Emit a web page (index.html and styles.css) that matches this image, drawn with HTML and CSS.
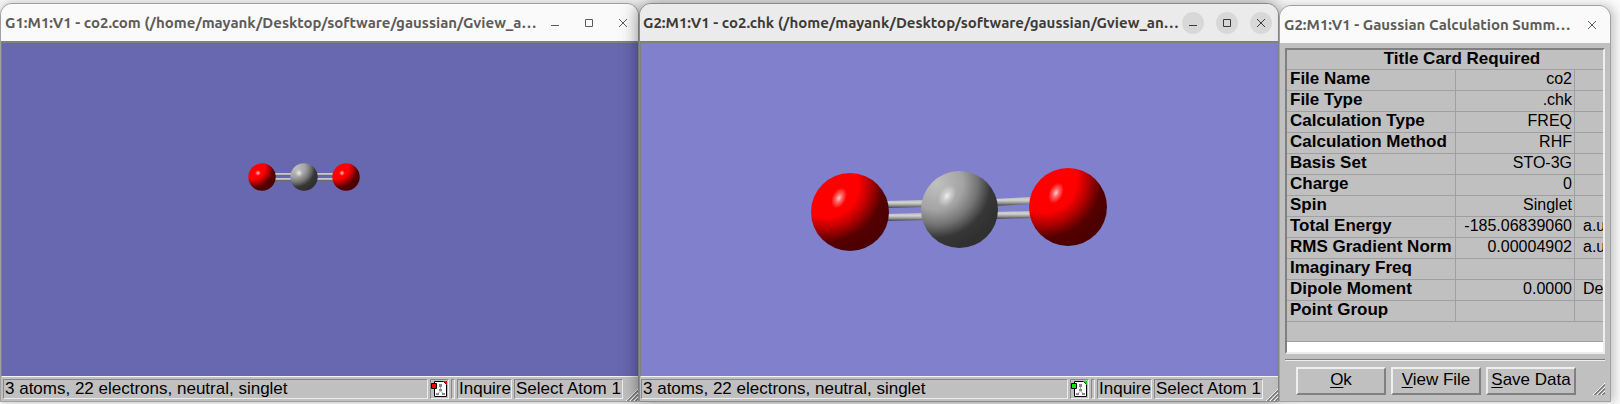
FILE: index.html
```
<!DOCTYPE html>
<html lang="en">
<head>
<meta charset="utf-8">
<title>GaussView</title>
<link rel="stylesheet" href="styles.css">
</head>
<body>
<svg class="defs" width="0" height="0" aria-hidden="true">
  <defs>
    <radialGradient id="red" cx=".2" cy=".16" r=".86">
      <stop offset="0" stop-color="#ff0000"/><stop offset=".48" stop-color="#fd0000"/><stop offset=".64" stop-color="#b80000"/><stop offset=".84" stop-color="#550000"/><stop offset="1" stop-color="#4d0000"/>
    </radialGradient>
    <radialGradient id="gray" cx=".2" cy=".16" r=".86">
      <stop offset="0" stop-color="#c0c0c0"/><stop offset=".4" stop-color="#a4a4a4"/><stop offset=".62" stop-color="#747474"/><stop offset=".82" stop-color="#373737"/><stop offset="1" stop-color="#303030"/>
    </radialGradient>
    <radialGradient id="shine">
      <stop offset="0" stop-color="#fff" stop-opacity=".8"/><stop offset=".4" stop-color="#fff" stop-opacity=".4"/><stop offset="1" stop-color="#fff" stop-opacity="0"/>
    </radialGradient>
    <linearGradient id="rod" x2="0" y2="1">
      <stop offset="0" stop-color="#bdbdbd"/><stop offset=".35" stop-color="#d2d2d2"/><stop offset=".65" stop-color="#9a9a9a"/><stop offset="1" stop-color="#404040"/>
    </linearGradient>
  </defs>
</svg>
<main class="desktop">
  <section class="window">
    <header class="titlebar">
      <h1 class="title">G1:M1:V1 - co2.com (/home/mayank/Desktop/software/gaussian/Gview_a…</h1>
      <div class="controls">
        <button class="control" aria-label="Minimize"><svg viewBox="0 0 22 22"><path d="M7 13.500h8"/></svg></button>
        <button class="control" aria-label="Maximize"><svg viewBox="0 0 22 22"><path d="M7.500 7.500h7v7h-7z"/></svg></button>
        <button class="control" aria-label="Close"><svg viewBox="0 0 22 22"><path d="M7 7l8 8M15 7l-8 8"/></svg></button>
      </div>
    </header>
    <div class="view">
      <svg class="molecule" viewBox="2 43 636 333" role="img" aria-label="Carbon dioxide molecule">
        <rect x="274" y="173" width="60" height="3" fill="url(#rod)"/>
        <rect x="274" y="178" width="60" height="3" fill="url(#rod)"/>
        <circle cx="262" cy="177" r="13.700" fill="url(#red)"/><circle cx="258" cy="173" r="3" fill="url(#shine)"/>
        <circle cx="304" cy="177" r="13.700" fill="url(#gray)"/><circle cx="299" cy="173" r="4" fill="url(#shine)"/>
        <circle cx="346" cy="177" r="13.700" fill="url(#red)"/><circle cx="342" cy="173" r="3" fill="url(#shine)"/>
      </svg>
    </div>
    <footer class="status">
      <span class="cell wide">3 atoms, 22 electrons, neutral, singlet</span>
      <span class="cell icon"><svg viewBox="0 0 17 18"><path d="M3.500 1.500h9l3 3v12h-12z" fill="#fff" stroke="#000"/><path d="M12 1h4v4z" fill="#f00"/><path d="M9.500 6v5L6 14.500M9.500 11l4 3.500" stroke="#aaa" fill="none"/><path d="M8 4h3v3H8zM8 9h3v2H8zM5 13h3v2H5zM11 13h3v2h-3z" fill="#888"/><path d="M.500 3.500h5v5h-5z" fill="#f00" stroke="#000"/></svg></span>
      <span class="cell slim"></span>
      <span class="cell mode">Inquire</span>
      <span class="cell pick">Select Atom 1</span>
      <svg class="grip" viewBox="0 0 12 12"><path d="M0 12L12 0M4 12l8-8M8 12l4-4" stroke="#fff"/><path d="M1.500 12L12 1.500M5.500 12L12 5.500M9.500 12L12 9.500" stroke="#777" stroke-width="1.500"/></svg>
    </footer>
  </section>

  <section class="window active">
    <header class="titlebar">
      <h1 class="title">G2:M1:V1 - co2.chk (/home/mayank/Desktop/software/gaussian/Gview_an…</h1>
      <div class="controls">
        <button class="control" aria-label="Minimize"><svg viewBox="0 0 22 22"><path d="M7 13.500h8"/></svg></button>
        <button class="control" aria-label="Maximize"><svg viewBox="0 0 22 22"><path d="M7.500 7.500h7v7h-7z"/></svg></button>
        <button class="control" aria-label="Close"><svg viewBox="0 0 22 22"><path d="M7 7l8 8M15 7l-8 8"/></svg></button>
      </div>
    </header>
    <div class="view">
      <svg class="molecule" viewBox="641 43 637 333" role="img" aria-label="Carbon dioxide molecule, enlarged">
        <path d="M886 201l38-1v7l-38 1z" fill="url(#rod)"/>
        <path d="M886 214l38-1v7l-38 1z" fill="url(#rod)"/>
        <path d="M994 199l38-2v7l-38 2z" fill="url(#rod)"/>
        <path d="M994 212l38-1v7l-38 1z" fill="url(#rod)"/>
        <circle cx="850" cy="212" r="39" fill="url(#red)"/><ellipse cx="839" cy="198" rx="7" ry="11" transform="rotate(25 839 198)" fill="url(#shine)"/>
        <circle cx="959.500" cy="209.500" r="38.500" fill="url(#gray)"/><ellipse cx="947" cy="196" rx="8" ry="12" transform="rotate(30 947 196)" fill="url(#shine)"/>
        <circle cx="1068" cy="207" r="39" fill="url(#red)"/><ellipse cx="1056" cy="193" rx="7" ry="11" transform="rotate(25 1056 193)" fill="url(#shine)"/>
      </svg>
    </div>
    <footer class="status">
      <span class="cell wide">3 atoms, 22 electrons, neutral, singlet</span>
      <span class="cell icon"><svg viewBox="0 0 17 18"><path d="M3.500 1.500h9l3 3v12h-12z" fill="#fff" stroke="#000"/><path d="M12 1h4v4z" fill="#0d0"/><path d="M9.500 6v5L6 14.500M9.500 11l4 3.500" stroke="#aaa" fill="none"/><path d="M8 4h3v3H8zM8 9h3v2H8zM5 13h3v2H5zM11 13h3v2h-3z" fill="#888"/><path d="M.500 3.500h5v5h-5z" fill="#0e0" stroke="#000"/></svg></span>
      <span class="cell slim"></span>
      <span class="cell mode">Inquire</span>
      <span class="cell pick">Select Atom 1</span>
      <svg class="grip" viewBox="0 0 12 12"><path d="M0 12L12 0M4 12l8-8M8 12l4-4" stroke="#fff"/><path d="M1.500 12L12 1.500M5.500 12L12 5.500M9.500 12L12 9.500" stroke="#777" stroke-width="1.500"/></svg>
    </footer>
  </section>

  <section class="window dialog">
    <header class="titlebar">
      <h1 class="title">G2:M1:V1 - Gaussian Calculation Summ…</h1>
      <div class="controls">
        <button class="control" aria-label="Close"><svg viewBox="0 0 22 22"><path d="M7 7l8 8M15 7l-8 8"/></svg></button>
      </div>
    </header>
    <div class="summary">
      <div class="frame">
        <table class="table">
          <colgroup><col class="name"><col class="value"><col class="unit"></colgroup>
          <thead><tr><th colspan="3" class="caption">Title Card Required</th></tr></thead>
          <tbody>
            <tr><th scope="row">File Name</th><td>co2</td><td></td></tr>
            <tr><th scope="row">File Type</th><td>.chk</td><td></td></tr>
            <tr><th scope="row">Calculation Type</th><td>FREQ</td><td></td></tr>
            <tr><th scope="row">Calculation Method</th><td>RHF</td><td></td></tr>
            <tr><th scope="row">Basis Set</th><td>STO-3G</td><td></td></tr>
            <tr><th scope="row">Charge</th><td>0</td><td></td></tr>
            <tr><th scope="row">Spin</th><td>Singlet</td><td></td></tr>
            <tr><th scope="row">Total Energy</th><td>-185.06839060</td><td class="measure">a.u.</td></tr>
            <tr><th scope="row">RMS Gradient Norm</th><td>0.00004902</td><td class="measure">a.u.</td></tr>
            <tr><th scope="row">Imaginary Freq</th><td></td><td></td></tr>
            <tr><th scope="row">Dipole Moment</th><td>0.0000</td><td class="measure">Debye</td></tr>
            <tr><th scope="row">Point Group</th><td></td><td></td></tr>
            <tr><td colspan="3" class="filler"></td></tr>
          </tbody>
        </table>
      </div>
      <div class="actions">
        <button class="button"><u>O</u>k</button>
        <button class="button"><u>V</u>iew File</button>
        <button class="button"><u>S</u>ave Data</button>
        <svg class="grip" viewBox="0 0 12 12"><path d="M0 12L12 0M4 12l8-8M8 12l4-4" stroke="#fff"/><path d="M1.500 12L12 1.500M5.500 12L12 5.500M9.500 12L12 9.500" stroke="#777" stroke-width="1.500"/></svg>
      </div>
    </div>
  </section>
</main>
</body>
</html>
```
FILE: styles.css
```
* { box-sizing: border-box; }
body {
  margin: 0;
  background: #fafafa;
  font-family: "Liberation Sans", Arial, sans-serif;
  font-size: 17px;
  color: #000;
}
.defs { position: absolute; }
.desktop {
  display: grid;
  grid-template-columns: 639fr 640fr 332fr;
  min-height: 100vh;
  padding: 3px 9px 2px 0;
  overflow: hidden;
}
.window {
  display: flex;
  flex-direction: column;
  min-width: 0;
  border: 1px solid #a0a0a0;
  border-radius: 12px 12px 0 0;
  background: #c0c0c0;
  box-shadow: 0 0 12px rgba(0, 0, 0, .25);
}
.active {
  z-index: 1;
  border-color: #8a8a8a;
  box-shadow: 0 0 18px rgba(0, 0, 0, .5);
}
.dialog { margin-top: 2px; z-index: 2; box-shadow: 4px 0 10px rgba(0, 0, 0, .2); }
.titlebar {
  display: flex;
  align-items: center;
  flex: none;
  height: 37px;
  padding: 0 4px;
  border-radius: 11px 11px 0 0;
  background: #fafafa;
  color: #5e5c59;
}
.active .titlebar { padding: 0 6px 0 3px; background: #ebebeb; color: #3d3b39; }
.dialog .titlebar { padding-right: 7px; }
.title {
  flex: 1;
  min-width: 0;
  margin: 0;
  overflow: hidden;
  white-space: nowrap;
  font: bold 15px/20px Ubuntu, "Noto Sans", sans-serif;
}
.controls { display: flex; gap: 12px; }
.control {
  width: 22px;
  height: 22px;
  padding: 0;
  border: 0;
  border-radius: 50%;
  background: none;
  color: inherit;
}
.active .control { background: #d8d8d8; }
.control svg { display: block; fill: none; stroke: currentColor; }
.view {
  flex: 1;
  min-height: 0;
  display: flex;
  border: solid #808080;
  border-width: 2px 0 0 1px;
  border-bottom: 1px solid #f4f4f4;
  background: #6868b0;
}
.active .view { background: #8080cc; }
.molecule { width: 100%; height: 100%; }
.status {
  display: flex;
  align-items: center;
  gap: 2px;
  flex: none;
  height: 24px;
  padding-left: 2px;
}
.active .status { padding-left: 1px; }
.cell {
  height: 20px;
  border: 1px solid;
  border-color: #888 #ededed #ededed #888;
  padding: 0 1px;
  line-height: 18px;
  white-space: nowrap;
}
.wide { flex: 1; }
.icon { width: 19px; padding: 0; }
.icon svg { display: block; width: 17px; height: 18px; }
.slim { width: 4px; }
.mode { width: 55px; }
.pick { width: 109px; margin-right: 1px; }
.grip { flex: none; align-self: flex-end; width: 12px; height: 12px; fill: none; }
.summary {
  flex: 1;
  display: flex;
  flex-direction: column;
  padding: 5px;
}
.frame {
  flex: 1;
  overflow: hidden;
  border: 2px solid;
  border-color: #808080 #eee #eee #808080;
  background: #fff;
}
.table {
  width: 350px;
  table-layout: fixed;
  border-collapse: separate;
  border-spacing: 0;
  background: #c0c0c0;
}
.name { width: 169px; }
.value { width: 119px; }
.table th, .table td {
  height: 21px;
  padding: 0 2px 2px 3px;
  border: solid #a0a0a4;
  border-width: 0 1px 1px 0;
  line-height: 18px;
  white-space: nowrap;
}
.table th { text-align: left; }
.table td { text-align: right; font-size: 16px; }
.table .caption { height: 20px; padding-bottom: 1px; text-align: center; }
.table .filler { height: 20px; }
.table .measure { text-align: left; padding-left: 8px; }
.actions {
  display: flex;
  gap: 5px;
  flex: none;
  margin-top: 5px;
  border-top: 1px solid #808080;
  box-shadow: inset 0 1px #eee;
  padding: 7px 0 1px 11px;
}
.button {
  width: 90px;
  height: 28px;
  padding: 0 0 3px;
  border: 2px solid;
  border-color: #eee #808080 #808080 #eee;
  background: #c0c0c0;
  font: inherit;
  color: inherit;
}
.actions .grip { margin-left: auto; }
u { text-underline-offset: 2px; }
```
